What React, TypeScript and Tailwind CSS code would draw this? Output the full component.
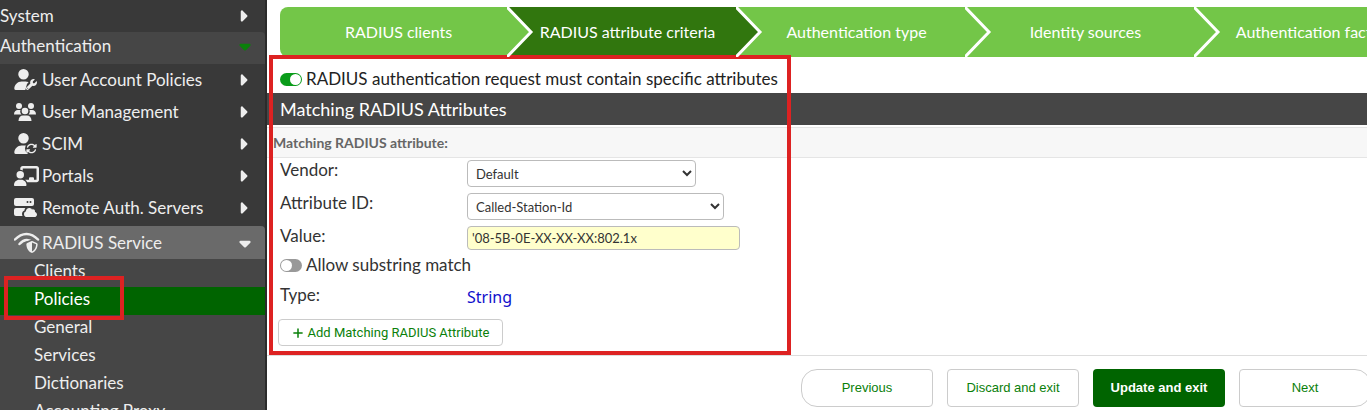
import { useState } from "react";
import type { ReactNode } from "react";
import { FaCaretDown, FaCaretRight, FaChalkboardUser, FaCloud, FaPlus, FaRotate, FaShieldHalved, FaUser, FaWifi, FaWrench } from "react-icons/fa6";

const wizardSteps = [
    "RADIUS clients",
    "RADIUS attribute criteria",
    "Authentication type",
    "Identity sources",
    "Authentication factors",
];

const radiusPages = ["Clients", "Policies", "General", "Services", "Dictionaries", "Accounting Proxy"];

function UserWrenchIcon() {
    return (
        <svg width="24" height="22" viewBox="0 0 24 22" fill="currentColor">
            <FaUser x="-1" y="0" size={21} />
            <path d="M11 22L13 15L18 9H24V22Z" fill="#393939" />
            <FaWrench x="12" y="10" size={11} />
        </svg>
    );
}

function UserSyncIcon() {
    return (
        <svg width="24" height="22" viewBox="0 0 24 22" fill="currentColor">
            <FaUser x="-1" y="0" size={21} />
            <circle cx="17.500" cy="15.500" r="6.500" fill="#393939" />
            <FaRotate x="12" y="10" size={11} />
        </svg>
    );
}

function UsersIcon() {
    return (
        <svg width="24" height="20" viewBox="0 0 24 20" fill="currentColor">
            <circle cx="5" cy="4" r="3" />
            <circle cx="17" cy="4" r="3" />
            <path d="M0 12.500c0-2.800 1.600-4.500 4-4.500h2.500c-.8 2 .2 3.500 1 4.500z" />
            <path d="M22 12.500c0-2.800-1.600-4.500-4-4.500h-2.500c.8 2-.2 3.500-1 4.500z" />
            <circle cx="11" cy="9" r="3.300" />
            <path d="M4.500 19c0-3.500 1.800-5.500 4.500-5.500h4c2.700 0 4.500 2 4.500 5.500z" />
        </svg>
    );
}

function ServerCloudIcon() {
    return (
        <svg width="24" height="22" viewBox="0 0 24 22" fill="currentColor">
            <rect x="0" y="1" width="20" height="8" rx="2" />
            <rect x="0" y="11" width="20" height="8" rx="2" />
            <circle cx="13.500" cy="5" r="1" fill="#393939" />
            <circle cx="16.500" cy="5" r="1" fill="#393939" />
            <FaCloud x="8" y="7" size={16} className="text-[#393939]" />
            <FaCloud x="10" y="9" size={13} />
        </svg>
    );
}

function WifiShieldIcon() {
    return (
        <svg width="26" height="22" viewBox="0 0 26 22" fill="none" stroke="currentColor" strokeLinecap="round">
            <path d="M1 7.500C8 0 17 0 24 7.500" strokeWidth="2.500" />
            <path d="M5.500 12C10 7 15 7 19.500 11" strokeWidth="2.500" />
            <path d="M17.500 7.500L24 10V14C24 18 21 20.500 17.500 22C14 20.500 11 18 11 14V10Z" fill="#6a6a6a" stroke="none" />
            <FaShieldHalved x="12" y="9" size={12} />
        </svg>
    );
}

const authMenu: { label: string; icon: ReactNode }[] = [
    { label: "User Account Policies", icon: <UserWrenchIcon /> },
    { label: "User Management", icon: <UsersIcon /> },
    { label: "SCIM", icon: <UserSyncIcon /> },
    { label: "Portals", icon: <FaChalkboardUser className="w-[25px] h-5" /> },
    { label: "Remote Auth. Servers", icon: <ServerCloudIcon /> },
];

function Sidebar() {
    return (
        <nav className="w-[267px] shrink-0 bg-[#393939] border-r-2 border-[#2b2b2b] text-[17px] leading-5 text-[#eeeeee]">
            <a href="#system" className="h-8 flex items-center justify-between pr-4">
                System
                <FaCaretRight className="w-3 h-[18px]" />
            </a>
            <a href="#authentication" className="h-8 flex items-center justify-between pr-3 pb-1 bg-[#464646] rounded-tr">
                Authentication
                <FaCaretDown className="w-4 h-[18px] text-[#0a800a]" />
            </a>
            <div className="pb-0.5">
                {authMenu.map((item) => (
                    <a key={item.label} href="#menu" className="h-8 flex items-center pl-[14px] pr-4">
                        <span className="w-7 shrink-0">{item.icon}</span>
                        {item.label}
                        <FaCaretRight className="w-3 h-[18px] ml-auto" />
                    </a>
                ))}
            </div>
            <a href="#radius" className="h-[33px] flex items-center pl-[14px] pr-3 bg-[#6a6a6a] rounded-tr">
                <span className="w-7 shrink-0">
                    <WifiShieldIcon />
                </span>
                RADIUS Service
                <FaCaretDown className="w-4 h-[18px] ml-auto" />
            </a>
            <ul className="bg-[#464646]">
                {radiusPages.map((page) => (
                    <li key={page} className="relative">
                        <a
                            href="#page"
                            className={`h-7 flex items-center pl-[34px] pb-1 ${page === "Policies" ? "bg-[#006400] text-white" : ""}`}
                        >
                            {page}
                        </a>
                        {page === "Policies" && (
                            <div className="absolute z-10 left-1 -top-[11px] w-[120px] h-11 border-4 border-[#dd2222] pointer-events-none" />
                        )}
                    </li>
                ))}
            </ul>
        </nav>
    );
}

function Wizard() {
    return (
        <ol className="flex ml-[13px] mt-[7px] h-[50px] rounded-l-lg overflow-hidden text-base text-white">
            {wizardSteps.map((step, i) => {
                const active = i === 1;
                return (
                    <li
                        key={step}
                        className={`relative w-[229px] shrink-0 flex items-center justify-center pl-2 whitespace-nowrap ${active ? "bg-[#31760e]" : "bg-[#73c648]"}`}
                    >
                        {step}
                        <svg
                            className={`absolute z-10 left-[227px] top-0 ${active ? "text-[#31760e]" : "text-[#73c648]"}`}
                            width="28"
                            height="50"
                            viewBox="0 0 28 50"
                        >
                            <path d="M0 0L24 25L0 50Z" fill="currentColor" />
                            <path d="M-1 -1L24 25L-1 51" fill="none" stroke="white" strokeWidth="3" />
                        </svg>
                    </li>
                );
            })}
        </ol>
    );
}

function Toggle({ label, initial }: { label: string; initial: boolean }) {
    const [on, setOn] = useState(initial);

    return (
        <label className="flex items-center gap-1 w-fit">
            <input
                type="checkbox"
                checked={on}
                onChange={() => setOn(!on)}
                className="appearance-none w-[22px] h-[13px] p-px rounded-full bg-[#999999] checked:bg-[#0a9c1a] before:block before:size-[11px] before:rounded-full before:bg-white checked:before:ml-[9px]"
            />
            {label}
        </label>
    );
}

export default function App() {
    const buttonStyle = "w-[132px] h-[38px] shrink-0 border border-[#cccccc] text-[13px] text-[#0a800a]";

    return (
        <div className="flex h-screen overflow-hidden bg-white font-['Lato',sans-serif]">
            <Sidebar />

            <main className="flex-1 min-w-0 overflow-hidden text-[17px] leading-5 text-[#333333]">
                <Wizard />

                <section className="relative pb-[9px]">
                    <div className="h-9 flex items-center pl-[13px] pt-2 text-[#222222]">
                        <Toggle label="RADIUS authentication request must contain specific attributes" initial={true} />
                    </div>

                    <h2 className="h-8 flex items-center pl-[13px] bg-[#464646] text-lg text-white">Matching RADIUS Attributes</h2>
                    <h3 className="h-[31px] mt-0.5 flex items-center pl-1.5 bg-[#f7f7f7] border-y border-[#e5e5e5] text-sm font-bold text-[#666666]">
                        Matching RADIUS attribute:
                    </h3>

                    <div className="pl-[13px] pt-0.5">
                        <div className="flex items-start h-[33px]">
                            <label htmlFor="vendor" className="w-[187px]">Vendor:</label>
                            <select id="vendor" className="w-[229px] h-[27px] pl-1 border border-[#bbbbbb] rounded-sm bg-white text-[13px]">
                                <option>Default</option>
                            </select>
                        </div>
                        <div className="flex items-start h-[33px]">
                            <label htmlFor="attribute" className="w-[187px]">Attribute ID:</label>
                            <select id="attribute" className="w-[257px] h-[27px] pl-1 border border-[#bbbbbb] rounded-sm bg-white text-[13px]">
                                <option>Called-Station-Id</option>
                            </select>
                        </div>
                        <div className="flex items-start h-[29px]">
                            <label htmlFor="value" className="w-[187px]">Value:</label>
                            <input
                                id="value"
                                type="text"
                                defaultValue="'08-5B-0E-XX-XX-XX:802.1x"
                                className="w-[273px] h-6 px-1 border border-[#bbbbbb] rounded-sm bg-[#ffffcc] text-[13px]"
                            />
                        </div>
                        <Toggle label="Allow substring match" initial={false} />
                        <div className="flex items-start pt-2.5">
                            <span className="w-[187px]">Type:</span>
                            <span className="pt-0.5 font-['Noto_Sans',sans-serif] text-base leading-5 text-[#1010cc]">String</span>
                        </div>
                    </div>

                    <button
                        type="button"
                        className="flex items-center justify-center gap-1 w-[225px] h-[27px] ml-[11px] mt-3 border border-[#cccccc] rounded font-['Roboto',sans-serif] text-[13px] text-[#0a800a]"
                    >
                        <FaPlus className="size-3" />
                        Add Matching RADIUS Attribute
                    </button>

                    <div className="absolute left-0.5 -top-0.5 w-[522px] bottom-0 border-4 border-[#dd2222] pointer-events-none" />
                </section>

                <footer className="flex justify-end gap-[14px] pt-[13px] -mr-1 border-t border-[#dddddd] font-['Liberation_Sans',sans-serif]">
                    <button type="button" className={`${buttonStyle} rounded-l-2xl rounded-r`}>Previous</button>
                    <button type="button" className={`${buttonStyle} rounded`}>Discard and exit</button>
                    <button type="button" className="w-[132px] h-[38px] shrink-0 rounded bg-[#006400] text-[13px] font-bold text-white">
                        Update and exit
                    </button>
                    <button type="button" className={`${buttonStyle} rounded-l rounded-r-2xl`}>Next</button>
                </footer>
            </main>
        </div>
    );
}
